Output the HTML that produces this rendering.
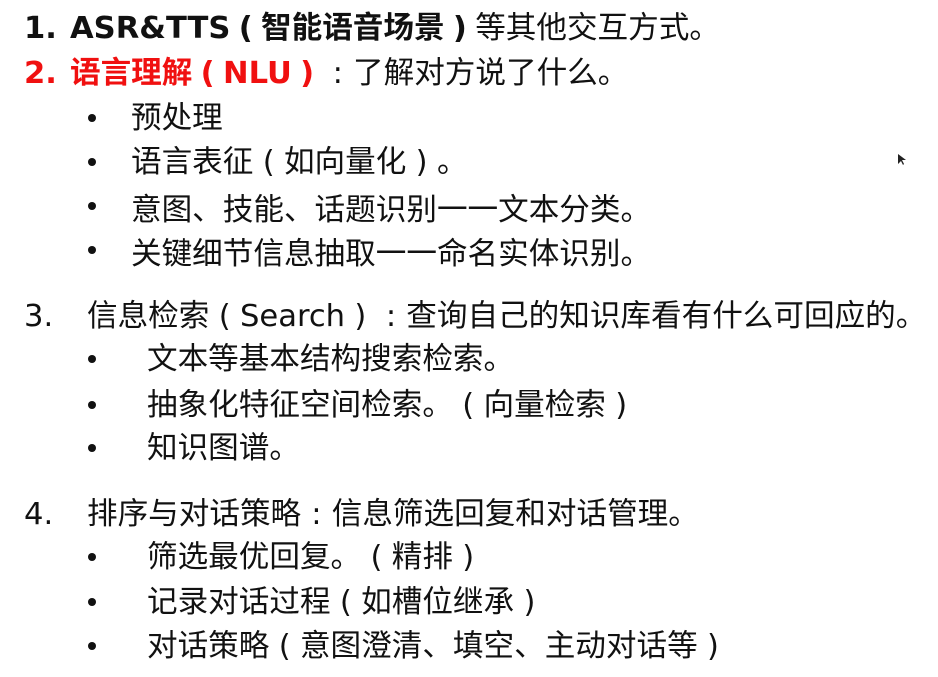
<!DOCTYPE html>
<html><head><meta charset="utf-8"><style>
body{margin:0;width:938px;height:677px;background:#fff;position:relative;overflow:hidden;font-family:"DejaVu Sans","Noto Sans CJK SC",sans-serif;font-size:30.6px;color:#111;}
.l{position:absolute;white-space:nowrap;line-height:40px;height:40px;}
.b{font-weight:bold;}
.r{color:#f01010;}
.c{font-family:"Noto Sans CJK SC",sans-serif;}
.p{display:inline-block;width:1em;text-align:center;}
.dot{position:absolute;width:8px;height:8px;border-radius:50%;background:#111;}
</style></head><body>
<div class="l b" style="left:24px;top:9px">1.</div>
<div class="l" style="left:70px;top:9px"><span class="b">ASR&amp;TTS<span class="p">(</span>智能语音场景<span class="p">)</span></span>等其他交互方式。</div>
<div class="l b r" style="left:24px;top:54px">2.</div>
<div class="l" style="left:70px;top:54px"><span class="b r">语言理解<span class="p">(</span>NLU<span class="p">)</span></span><span class="p">:</span>了解对方说了什么。</div>
<div class="dot" style="left:88px;top:114px"></div><div class="l" style="left:131px;top:99px">预处理</div>
<div class="dot" style="left:88px;top:158px"></div><div class="l" style="left:131px;top:143px">语言表征<span class="p">(</span>如向量化<span class="p">)</span>。</div>
<div class="dot" style="left:88px;top:202px"></div><div class="l" style="left:131px;top:187px">意图、技能、话题识别<span class="c">一一</span>文本分类。</div>
<div class="dot" style="left:88px;top:246px"></div><div class="l" style="left:131px;top:231px">关键细节信息抽取<span class="c">一一</span>命名实体识别。</div>
<div class="l" style="left:24px;top:297px">3.</div>
<div class="l" style="left:87px;top:297px">信息检索<span class="p">(</span>Search<span class="p">)</span><span class="p">:</span>查询自己的知识库看有什么可回应的。</div>
<div class="dot" style="left:88px;top:355px"></div><div class="l" style="left:147px;top:340px">文本等基本结构搜索检索。</div>
<div class="dot" style="left:88px;top:401px"></div><div class="l" style="left:147px;top:386px">抽象化特征空间检索。<span class="p">(</span>向量检索<span class="p">)</span></div>
<div class="dot" style="left:88px;top:444px"></div><div class="l" style="left:147px;top:429px">知识图谱。</div>
<div class="l" style="left:24px;top:495px">4.</div>
<div class="l" style="left:87px;top:495px">排序与对话策略<span class="p">:</span>信息筛选回复和对话管理。</div>
<div class="dot" style="left:88px;top:553px"></div><div class="l" style="left:147px;top:538px">筛选最优回复。<span class="p">(</span>精排<span class="p">)</span></div>
<div class="dot" style="left:88px;top:598px"></div><div class="l" style="left:147px;top:583px">记录对话过程<span class="p">(</span>如槽位继承<span class="p">)</span></div>
<div class="dot" style="left:88px;top:642px"></div><div class="l" style="left:147px;top:627px">对话策略<span class="p">(</span>意图澄清、填空、主动对话等<span class="p">)</span></div>
<svg style="position:absolute;left:897px;top:153px" width="10" height="14"><path d="M1 1 L1 11 L4 8 L6 12 L7 11 L5 7 L9 7 Z" fill="#222"/></svg>
</body></html>
